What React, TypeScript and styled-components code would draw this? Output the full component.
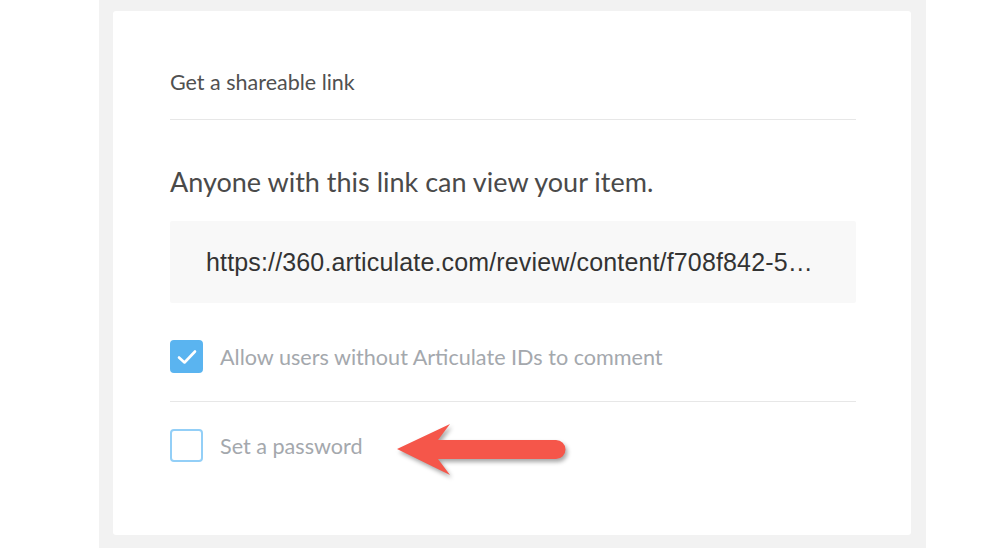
import styled, { createGlobalStyle } from "styled-components";

const GlobalStyle = createGlobalStyle`
  body {
    margin: 0;
    background: #ffffff;
    font-family: Lato, "Open Sans", sans-serif;
  }
`;

const Frame = styled.div`
  box-sizing: border-box;
  width: 827px;
  height: 548px;
  margin-left: 99px;
  padding: 11px 15px 13px 14px;
  background: #f2f2f2;
`;

const Card = styled.section`
  box-sizing: border-box;
  height: 524px;
  padding: 59px 55px 0 57px;
  background: #ffffff;
  border-radius: 3px;
`;

const Title = styled.h2`
  margin: 0;
  padding-bottom: 25px;
  border-bottom: 1px solid #e7e7e7;
  font-size: 21.5px;
  line-height: 24px;
  font-weight: 400;
  color: #505050;
`;

const Lead = styled.p`
  margin: 47px 0 24px;
  font-size: 27px;
  line-height: 30px;
  color: #4a4a4a;
`;

const LinkBox = styled.div`
  box-sizing: border-box;
  height: 82px;
  padding: 0 36px;
  display: flex;
  align-items: center;
  background: #f8f8f8;
  border-radius: 2px;
`;

const LinkText = styled.span`
  font-family: "Liberation Sans", Arial, sans-serif;
  font-size: 25px;
  letter-spacing: 0.15px;
  color: #333333;
  white-space: nowrap;
`;

const OptionRow = styled.label<{ $divider?: boolean }>`
  position: relative;
  display: flex;
  align-items: center;
  gap: 17px;
  padding: ${(p) => (p.$divider ? "37px 0 28px" : "27px 0 0")};
  border-bottom: ${(p) => (p.$divider ? "1px solid #e7e7e7" : "none")};
`;

const Box = styled.span<{ $checked?: boolean }>`
  box-sizing: border-box;
  width: 33px;
  height: 33px;
  flex: none;
  display: flex;
  align-items: center;
  justify-content: center;
  border-radius: 4px;
  background: ${(p) => (p.$checked ? "#5ab4f0" : "#ffffff")};
  border: 2px solid ${(p) => (p.$checked ? "#5ab4f0" : "#93cff7")};
`;

const OptionLabel = styled.span`
  font-size: 21.6px;
  line-height: 26px;
  color: #a4a8ad;
`;

const Arrow = styled.svg`
  position: absolute;
  left: 220px;
  top: 15px;
  filter: drop-shadow(2px 3px 2px rgba(0, 0, 0, 0.35));
`;

export default function App() {
  return (
    <>
      <GlobalStyle />
      <Frame>
        <Card>
          <Title>Get a shareable link</Title>
          <Lead>Anyone with this link can view your item.</Lead>
          <LinkBox>
            <LinkText>https://360.articulate.com/review/content/f708f842-5…</LinkText>
          </LinkBox>
          <OptionRow $divider>
            <Box $checked>
              <svg width="20" height="16" viewBox="0 0 20 16">
                <path
                  d="M2 8.5 L7.5 13.5 L18 2.5"
                  fill="none"
                  stroke="#ffffff"
                  strokeWidth="2.6"
                  strokeLinecap="round"
                  strokeLinejoin="round"
                />
              </svg>
            </Box>
            <OptionLabel>Allow users without Articulate IDs to comment</OptionLabel>
          </OptionRow>
          <OptionRow>
            <Box />
            <OptionLabel>Set a password</OptionLabel>
            <Arrow width="185" height="70" viewBox="0 0 185 70">
              <path
                d="M7 32 L60 7 L48 23 L166 23 A9.5 9.5 0 0 1 166 42 L48 42 L60 58 Z"
                fill="#f5564a"
              />
            </Arrow>
          </OptionRow>
        </Card>
      </Frame>
    </>
  );
}
